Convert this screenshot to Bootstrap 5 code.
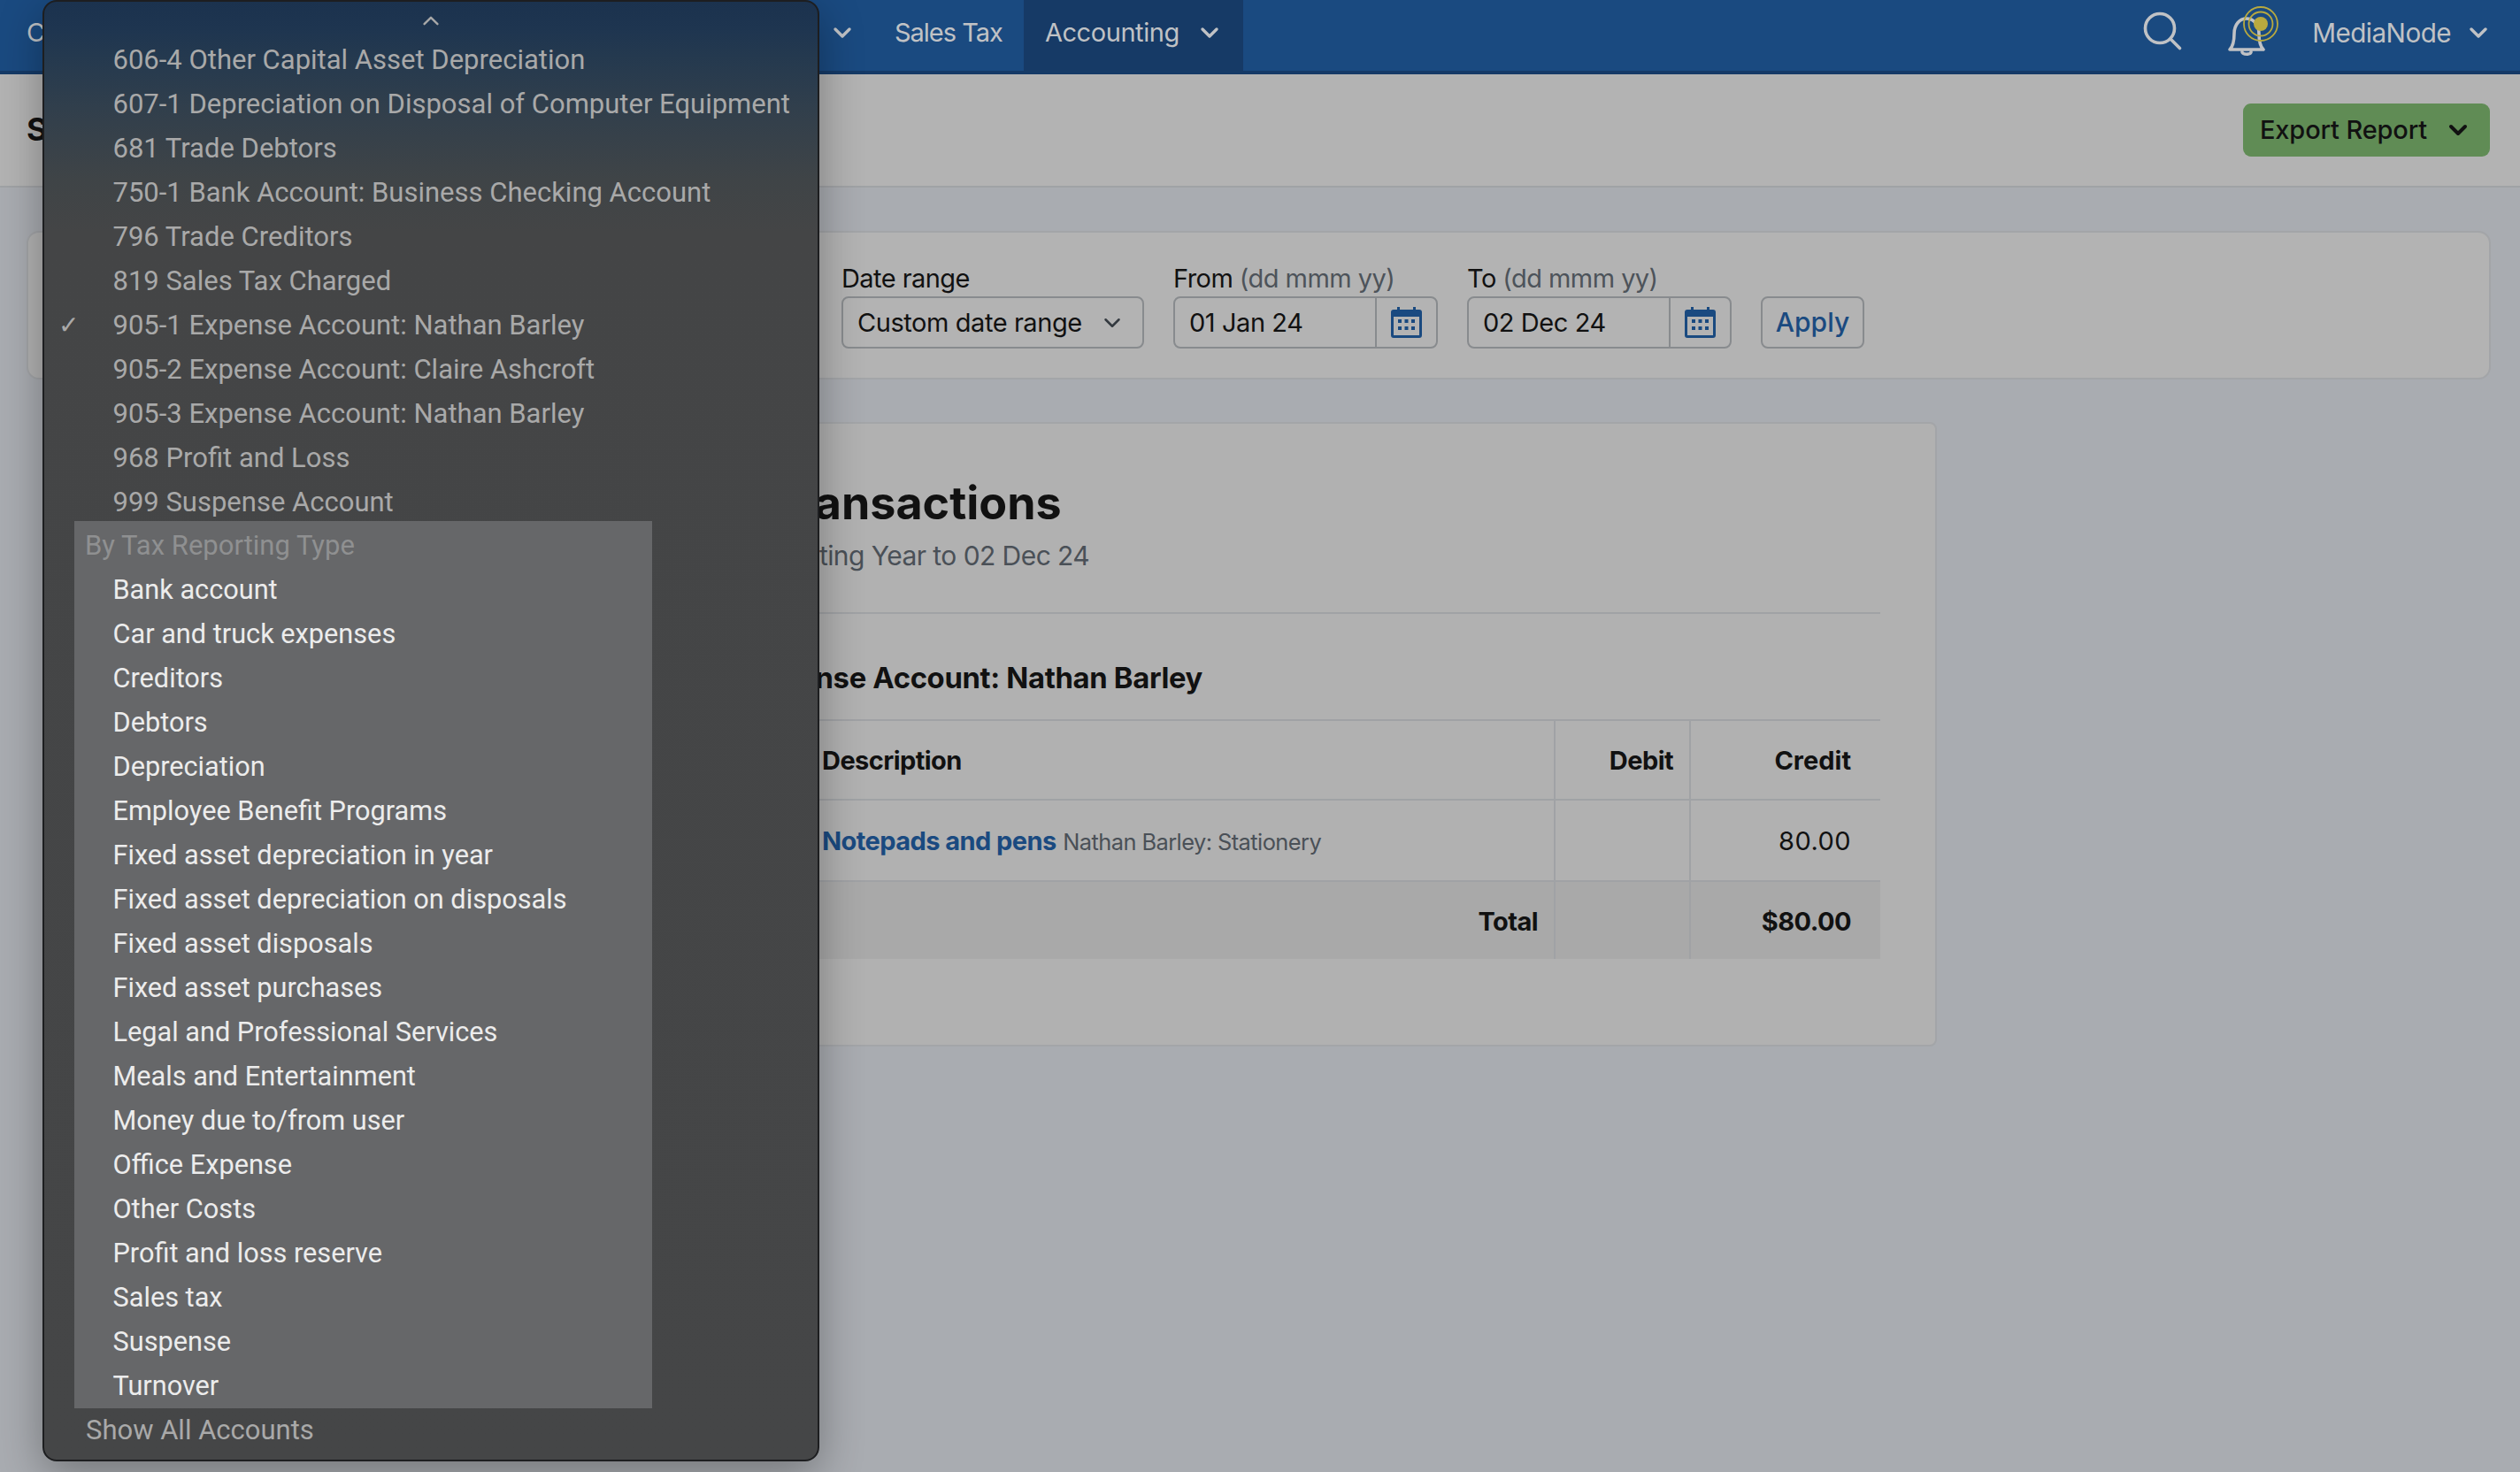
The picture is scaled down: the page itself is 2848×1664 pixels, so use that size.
<!DOCTYPE html>
<html lang="en">
<head>
<meta charset="utf-8">
<title>Account Transactions</title>
<link href="https://cdn.jsdelivr.net/npm/bootstrap@5.3.0/dist/css/bootstrap.min.css" rel="stylesheet">
<style>
html,body{height:100%;}
body{background:#a9acb1;font-family:"Inter","Liberation Sans",sans-serif;font-size:28px;letter-spacing:-.02em;color:#111;overflow:hidden;position:relative;}
.top-nav{height:84px;background:#1a4a80;border-bottom:4px solid #153a67;padding:0;align-items:stretch;flex-wrap:nowrap;}
.top-nav .nav-link{color:#c0c2c5;font-size:29px;padding:0 24px 7px;height:80px;display:flex;align-items:center;gap:23px;}
.top-nav .nav-link.active{background:#163a66;color:#c0c2c5;height:82px;padding-bottom:9px;padding-right:27px;letter-spacing:-.015em;}
.nav-first{width:987px;justify-content:space-between;padding-left:30px!important;}
.nav-tax{letter-spacing:-.035em;}
.chev{width:22px;height:14px;fill:none;stroke:currentColor;stroke-width:3.4;stroke-linecap:round;stroke-linejoin:round;flex:none;}
.top-right{margin-left:auto;display:flex;align-items:center;padding-right:36px;padding-bottom:6px;color:#c0c2c5;}
.top-right .bell{margin-left:41px;}
.top-right .user{font-size:29.7px;margin-left:35px;display:flex;gap:20px;align-items:center;}
.sub-head{height:128px;background:#b3b3b3;border-bottom:2px solid #a0a2a5;padding:0 34px 0 30px;}
.sub-head h1{font-size:36px;font-weight:700;margin:0;letter-spacing:0;}
.btn-export{background:#608c55;border:0;border-radius:9px;width:279px;height:60px;color:#111;font-size:29px;font-weight:500;display:flex;align-items:center;padding:0 25px 0 19px;justify-content:space-between;letter-spacing:-.005em;}
.btn-export .chev{stroke-width:4;}
.btn-export:hover{background:#608c55;color:#111;}
.filter-card{margin:49px 33px 0 30px;height:168px;background:#b3b3b3;border:2px solid #a3a5a8;border-radius:14px;padding:0;box-shadow:none;}
.filter-row{display:flex;align-items:flex-end;padding-top:35px;padding-left:919px;}
.filter-row label{display:block;font-size:29px;line-height:34px;margin:0 0 3px;color:#111;white-space:nowrap;}
.filter-row label span{color:#4d535a;}
.f-date{width:342px;margin-right:33px;}
.f-from{width:299px;margin-right:33px;}
.form-select.sel{width:342px;height:59px;background-color:transparent;border:2px solid #888b8e;border-radius:8px;color:#111;font-size:29px;padding:0 16px;letter-spacing:-.015em;background-size:28px 20px;background-position:right 20px center;}
.input-group.dg{height:59px;border:2px solid #888b8e;border-radius:8px;flex-wrap:nowrap;}
.dg .form-control{background:transparent;border:0;font-size:29px;color:#111;padding:0 16px;height:55px;letter-spacing:-.015em;}
.dg .input-group-text{background:transparent;border:0;border-left:2px solid #888b8e;border-radius:0;width:69px;padding:0 0 2px;justify-content:center;}
.cal{width:37px;height:36px;}
.btn-apply{height:59px;width:117px;border:2px solid #888b8e;border-radius:8px;background:transparent;color:#1a4a80;font-size:30px;font-weight:500;padding:0;}
.report-wrap{margin:48px 0 0 680px;width:1509px;}
.report-card{height:706px;background:#b1b1b1;border:2px solid #a3a5a8;border-radius:8px;padding:58px 62px 0 62px;}
.report-card h2{font-size:52px;font-weight:700;margin:0 0 0 -18px;line-height:64px;letter-spacing:0;}
.report-card .sub{font-size:30px;color:#4a5057;line-height:40px;margin-top:7px;padding-left:11px;}
.report-card hr{border:0;border-top:2px solid #a0a2a5;opacity:1;margin:44px 0 0;}
.report-card h3{font-size:32.8px;font-weight:700;line-height:40px;margin:52px 0 27px;letter-spacing:-.01em;}
.tx{width:1381px;margin:0;table-layout:fixed;--bs-table-bg:transparent;border-top:2px solid #a0a2a5;}
.table.tx>:not(caption)>*>*{background:transparent;border-bottom:2px solid #a0a2a5;color:#111;padding:2px 18px 0;vertical-align:middle;box-shadow:none;}
.tx td+td,.tx th+th{border-left:2px solid #a0a2a5;}
.tx th{font-weight:700;font-size:29px;height:90px;}
.tx th.c4{letter-spacing:0;}
.tx .r1 td{height:92px;font-size:29px;}
.tx .r1 .c4{letter-spacing:.015em;}
.table.tx>:not(caption)>.rt>*{height:88px;background:#a9a9a9;font-weight:700;border-bottom:0;font-size:29px;}
.tx .c1{width:166px;}.tx .c2{width:847px;}.tx .c3{width:153px;}.tx .c4{width:215px;}
.table.tx>:not(caption)>*>.c4{padding-right:33px;}
.tx a{color:#1a4a80;font-weight:700;text-decoration:none;}
.tx small{font-size:25.4px;color:#4a5057;}
.os-menu{position:absolute;top:0;left:48px;width:878px;height:1652px;margin:0;padding:0;border:2px solid #1d1e20;border-radius:16px;background:linear-gradient(180deg,#1b324e 0,#1e3550 30px,#24394f 60px,#313f4c 120px,#3f4447 200px,#444546 260px,#454647 100%);box-shadow:0 14px 50px rgba(0,0,0,.32);font-family:Roboto,"Liberation Sans",sans-serif;font-size:31px;letter-spacing:0;z-index:10;display:block;}
.os-up{height:41px;display:flex;justify-content:center;padding-top:15px;color:#a8a8a8;}
.os-up svg{width:22px;height:13px;stroke-width:2.6;}
.os-menu .dropdown-item{height:50px;line-height:50px;padding:0 0 0 77.5px;color:#a9a9a9;position:relative;background:transparent;}
.os-tick{position:absolute;left:16px;top:0;font-size:28px;}
.os-block{margin:-4px 0 0 34px;width:653px;padding-top:3px;background:#666769;font-size:30.7px;}
.os-block .dropdown-item{color:#ececec;padding-left:43.5px;}
.os-block .dropdown-header{height:50px;line-height:50px;padding:0 0 0 12px;color:#8f9091;font-size:31px;}
.os-menu .os-foot{padding-left:47px;height:50px;line-height:50px;color:#a9a9a9;}
</style>
</head>
<body>
<svg width="0" height="0" class="position-absolute">
  <symbol id="cd" viewBox="0 0 22 14"><path d="M3 3l8 8 8-8"/></symbol>
  <symbol id="cu" viewBox="0 0 22 14"><path d="M3 11l8-8 8 8"/></symbol>
  <symbol id="cal" viewBox="0 0 37 36"><path fill="#1a4a80" d="M4 4h4V1h3v3h15V1h3v3h4a3 3 0 0 1 3 3v26a3 3 0 0 1-3 3H4a3 3 0 0 1-3-3V7a3 3 0 0 1 3-3zm0 8v21h29V12z"/><g fill="#1a4a80"><rect x="9" y="15" width="4" height="4"/><rect x="16.500" y="15" width="4" height="4"/><rect x="24" y="15" width="4" height="4"/><rect x="9" y="23" width="4" height="4"/><rect x="16.500" y="23" width="4" height="4"/><rect x="24" y="23" width="4" height="4"/></g></symbol>
</svg>

<nav class="navbar top-nav">
  <div class="nav">
    <a class="nav-link nav-first" href="#">Contacts<svg class="chev"><use href="#cd"/></svg></a>
    <a class="nav-link nav-tax" href="#">Sales Tax</a>
    <a class="nav-link active" href="#">Accounting<svg class="chev"><use href="#cd"/></svg></a>
  </div>
  <div class="top-right">
    <svg width="50" height="50" viewBox="0 0 50 50" fill="none" stroke="#c0c2c5" stroke-width="3.6" stroke-linecap="round"><circle cx="20" cy="20" r="16.500"/><path d="M32 32l10.500 10.500"/></svg>
    <svg class="bell" width="66" height="60" viewBox="0 0 66 60" fill="none"><path d="M8 49c4-4 5-9 5-18 0-10 6-17 14-17s14 7 14 17c0 9 1 14 5 18zM22 52c1 3 9 3 10 0" stroke="#c0c2c5" stroke-width="3.6" stroke-linejoin="round" stroke-linecap="round" fill="none"/><circle cx="43" cy="20" r="8" fill="#b8a93f"/><circle cx="43" cy="20" r="13.500" stroke="#b8a93f" stroke-width="1.800"/><circle cx="43" cy="20" r="19" stroke="#b8a93f" stroke-width="1.800"/></svg>
    <div class="user">MediaNode<svg class="chev"><use href="#cd"/></svg></div>
  </div>
</nav>

<header class="sub-head d-flex align-items-center justify-content-between">
  <h1>Summary</h1>
  <button class="btn btn-export" type="button">Export Report<svg class="chev"><use href="#cd"/></svg></button>
</header>

<section class="card filter-card">
  <div class="filter-row">
    <div class="f-date">
      <label for="dr">Date range</label>
      <select id="dr" class="form-select sel"><option>Custom date range</option></select>
    </div>
    <div class="f-from">
      <label for="fd">From <span>(dd mmm yy)</span></label>
      <div class="input-group dg"><input id="fd" class="form-control" value="01 Jan 24"><span class="input-group-text"><svg class="cal"><use href="#cal"/></svg></span></div>
    </div>
    <div class="f-from">
      <label for="td">To <span>(dd mmm yy)</span></label>
      <div class="input-group dg"><input id="td" class="form-control" value="02 Dec 24"><span class="input-group-text"><svg class="cal"><use href="#cal"/></svg></span></div>
    </div>
    <button class="btn btn-apply" type="button">Apply</button>
  </div>
</section>

<main class="report-wrap">
  <div class="card report-card">
    <h2>Cash Transactions</h2>
    <div class="sub">This Accounting Year to 02 Dec 24</div>
    <hr>
    <h3>905-1 Expense Account: Nathan Barley</h3>
    <table class="table tx">
      <thead><tr><th class="c1">Date</th><th class="c2">Description</th><th class="c3 text-end">Debit</th><th class="c4 text-end">Credit</th></tr></thead>
      <tbody>
        <tr class="r1"><td class="c1"></td><td><a href="#">Notepads and pens</a> <small>Nathan Barley: Stationery</small></td><td></td><td class="c4 text-end">80.00</td></tr>
        <tr class="rt"><td class="c1"></td><td class="text-end">Total</td><td></td><td class="c4 text-end">$80.00</td></tr>
      </tbody>
    </table>
  </div>
</main>

<div class="dropdown-menu show os-menu">
  <div class="os-up"><svg class="chev"><use href="#cu"/></svg></div>
  <a class="dropdown-item" href="#">606-4 Other Capital Asset Depreciation</a>
  <a class="dropdown-item" href="#">607-1 Depreciation on Disposal of Computer Equipment</a>
  <a class="dropdown-item" href="#">681 Trade Debtors</a>
  <a class="dropdown-item" href="#">750-1 Bank Account: Business Checking Account</a>
  <a class="dropdown-item" href="#">796 Trade Creditors</a>
  <a class="dropdown-item" href="#">819 Sales Tax Charged</a>
  <a class="dropdown-item" href="#"><span class="os-tick">✓</span>905-1 Expense Account: Nathan Barley</a>
  <a class="dropdown-item" href="#">905-2 Expense Account: Claire Ashcroft</a>
  <a class="dropdown-item" href="#">905-3 Expense Account: Nathan Barley</a>
  <a class="dropdown-item" href="#">968 Profit and Loss</a>
  <a class="dropdown-item" href="#">999 Suspense Account</a>
  <div class="os-block">
    <div class="dropdown-header">By Tax Reporting Type</div>
    <a class="dropdown-item" href="#">Bank account</a>
    <a class="dropdown-item" href="#">Car and truck expenses</a>
    <a class="dropdown-item" href="#">Creditors</a>
    <a class="dropdown-item" href="#">Debtors</a>
    <a class="dropdown-item" href="#">Depreciation</a>
    <a class="dropdown-item" href="#">Employee Benefit Programs</a>
    <a class="dropdown-item" href="#">Fixed asset depreciation in year</a>
    <a class="dropdown-item" href="#">Fixed asset depreciation on disposals</a>
    <a class="dropdown-item" href="#">Fixed asset disposals</a>
    <a class="dropdown-item" href="#">Fixed asset purchases</a>
    <a class="dropdown-item" href="#">Legal and Professional Services</a>
    <a class="dropdown-item" href="#">Meals and Entertainment</a>
    <a class="dropdown-item" href="#">Money due to/from user</a>
    <a class="dropdown-item" href="#">Office Expense</a>
    <a class="dropdown-item" href="#">Other Costs</a>
    <a class="dropdown-item" href="#">Profit and loss reserve</a>
    <a class="dropdown-item" href="#">Sales tax</a>
    <a class="dropdown-item" href="#">Suspense</a>
    <a class="dropdown-item" href="#">Turnover</a>
  </div>
  <a class="dropdown-item os-foot" href="#">Show All Accounts</a>
</div>
<script src="https://cdn.jsdelivr.net/npm/bootstrap@5.3.0/dist/js/bootstrap.bundle.min.js"></script>
</body>
</html>
